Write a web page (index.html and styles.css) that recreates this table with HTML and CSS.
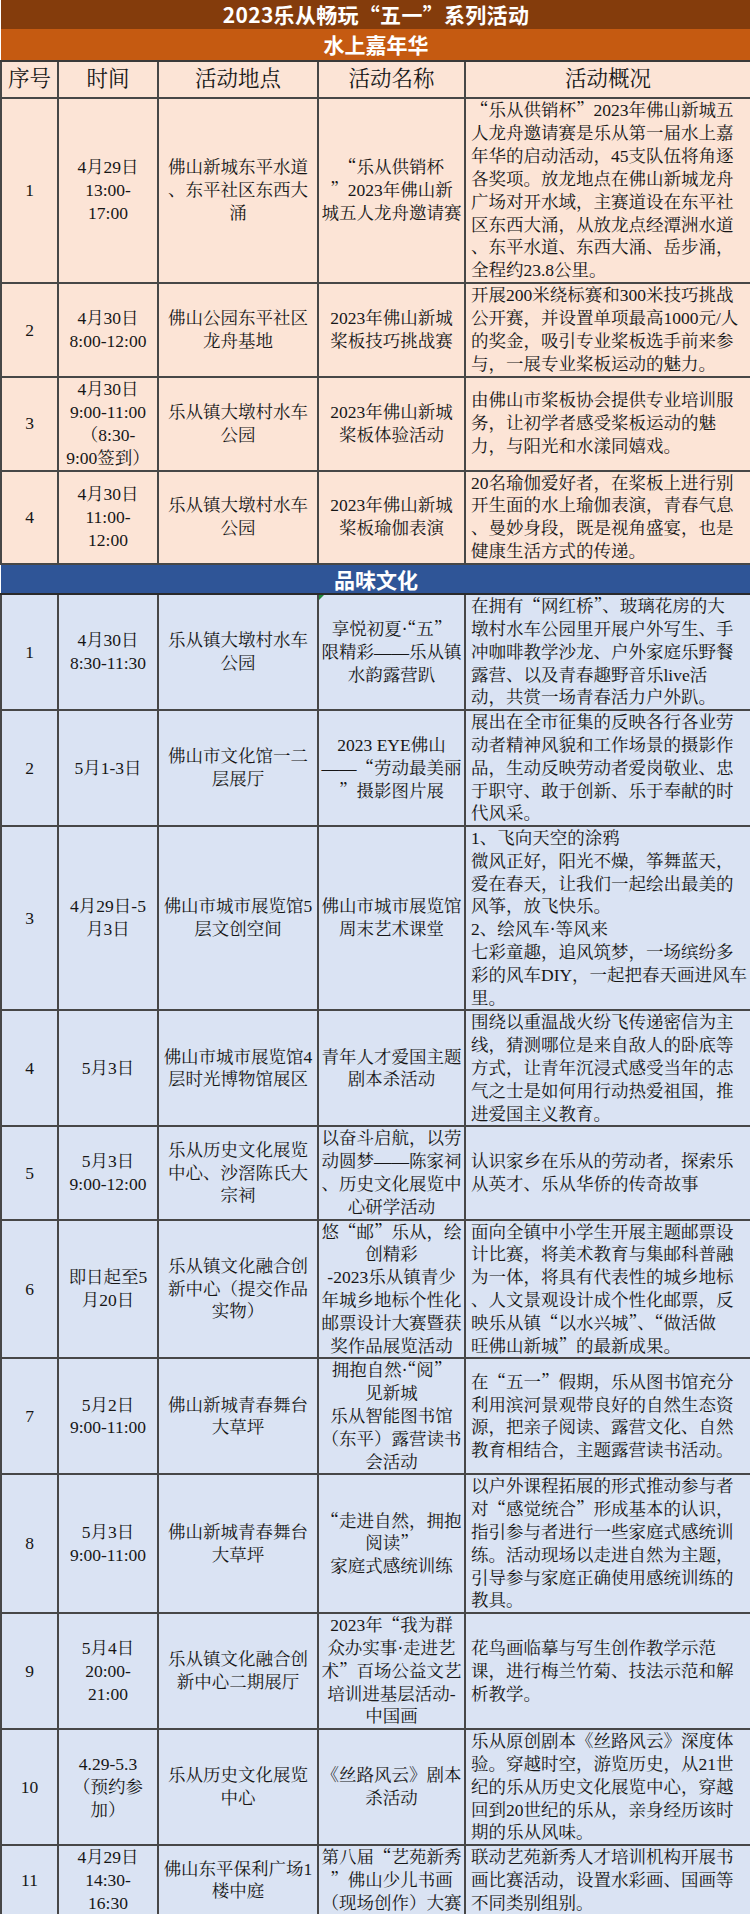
FILE: index.html
```html
<!DOCTYPE html>
<html lang="zh-CN">
<head>
<meta charset="utf-8">
<title>2023乐从畅玩“五一”系列活动</title>
<link rel="stylesheet" href="styles.css">
</head>
<body>
<table class="sheet">
  <colgroup>
    <col class="c-no">
    <col class="c-time">
    <col class="c-place">
    <col class="c-name">
    <col class="c-desc">
  </colgroup>
  <tbody>
    <tr class="banner title"><td colspan="5">2023乐从畅玩“五一”系列活动</td></tr>
    <tr class="banner water-bar"><td colspan="5">水上嘉年华</td></tr>
    <tr class="head">
      <th>序号</th><th>时间</th><th>活动地点</th><th>活动名称</th><th>活动概况</th>
    </tr>

    <tr class="water">
      <td>1</td>
      <td>4月29日<br>13:00-<br>17:00</td>
      <td>佛山新城东平水道<br>、东平社区东西大<br>涌</td>
      <td><span class="q">“</span>乐从供销杯<br><span class="q">”</span>2023年佛山新<br>城五人龙舟邀请赛</td>
      <td class="desc"><span class="q">“</span>乐从供销杯<span class="q">”</span>2023年佛山新城五<br>人龙舟邀请赛是乐从第一届水上嘉<br>年华的启动活动，45支队伍将角逐<br>各奖项。放龙地点在佛山新城龙舟<br>广场对开水域，主赛道设在东平社<br>区东西大涌，从放龙点经潭洲水道<br>、东平水道、东西大涌、岳步涌，<br>全程约23.8公里。</td>
    </tr>
    <tr class="water">
      <td>2</td>
      <td>4月30日<br>8:00-12:00</td>
      <td>佛山公园东平社区<br>龙舟基地</td>
      <td>2023年佛山新城<br>桨板技巧挑战赛</td>
      <td class="desc">开展200米绕标赛和300米技巧挑战<br>公开赛，并设置单项最高1000元/人<br>的奖金，吸引专业桨板选手前来参<br>与，一展专业桨板运动的魅力。</td>
    </tr>
    <tr class="water">
      <td>3</td>
      <td>4月30日<br>9:00-11:00<br>（8:30-<br>9:00签到）</td>
      <td>乐从镇大墩村水车<br>公园</td>
      <td>2023年佛山新城<br>桨板体验活动</td>
      <td class="desc">由佛山市桨板协会提供专业培训服<br>务，让初学者感受桨板运动的魅<br>力，与阳光和水漾同嬉戏。</td>
    </tr>
    <tr class="water">
      <td>4</td>
      <td>4月30日<br>11:00-<br>12:00</td>
      <td>乐从镇大墩村水车<br>公园</td>
      <td>2023年佛山新城<br>桨板瑜伽表演</td>
      <td class="desc">20名瑜伽爱好者，在桨板上进行别<br>开生面的水上瑜伽表演，青春气息<br>、曼妙身段，既是视角盛宴，也是<br>健康生活方式的传递。</td>
    </tr>

    <tr class="banner culture-bar"><td colspan="5">品味文化</td></tr>

    <tr class="culture">
      <td>1</td>
      <td>4月30日<br>8:30-11:30</td>
      <td>乐从镇大墩村水车<br>公园</td>
      <td class="flagged">享悦初夏<span class="q">·“</span>五<span class="q">”</span><br>限精彩——乐从镇<br>水韵露营趴</td>
      <td class="desc">在拥有<span class="q">“</span>网红桥<span class="q">”</span>、玻璃花房的大<br>墩村水车公园里开展户外写生、手<br>冲咖啡教学沙龙、户外家庭乐野餐<br>露营、以及青春趣野音乐live活<br>动，共赏一场青春活力户外趴。</td>
    </tr>
    <tr class="culture">
      <td>2</td>
      <td>5月1-3日</td>
      <td>佛山市文化馆一二<br>层展厅</td>
      <td>2023 EYE佛山<br>——<span class="q">“</span>劳动最美丽<br><span class="q">”</span>摄影图片展</td>
      <td class="desc">展出在全市征集的反映各行各业劳<br>动者精神风貌和工作场景的摄影作<br>品，生动反映劳动者爱岗敬业、忠<br>于职守、敢于创新、乐于奉献的时<br>代风采。</td>
    </tr>
    <tr class="culture">
      <td>3</td>
      <td>4月29日-5<br>月3日</td>
      <td>佛山市城市展览馆5<br>层文创空间</td>
      <td>佛山市城市展览馆<br>周末艺术课堂</td>
      <td class="desc">1、飞向天空的涂鸦<br>微风正好，阳光不燥，筝舞蓝天，<br>爱在春天，让我们一起绘出最美的<br>风筝，放飞快乐。<br>2、绘风车<span class="q">·</span>等风来<br>七彩童趣，追风筑梦，一场缤纷多<br>彩的风车DIY，一起把春天画进风车<br>里。</td>
    </tr>
    <tr class="culture">
      <td>4</td>
      <td>5月3日</td>
      <td>佛山市城市展览馆4<br>层时光博物馆展区</td>
      <td>青年人才爱国主题<br>剧本杀活动</td>
      <td class="desc">围绕以重温战火纷飞传递密信为主<br>线，猜测哪位是来自敌人的卧底等<br>方式，让青年沉浸式感受当年的志<br>气之士是如何用行动热爱祖国，推<br>进爱国主义教育。</td>
    </tr>
    <tr class="culture">
      <td>5</td>
      <td>5月3日<br>9:00-12:00</td>
      <td>乐从历史文化展览<br>中心、沙滘陈氏大<br>宗祠</td>
      <td>以奋斗启航，以劳<br>动圆梦——陈家祠<br>、历史文化展览中<br>心研学活动</td>
      <td class="desc">认识家乡在乐从的劳动者，探索乐<br>从英才、乐从华侨的传奇故事</td>
    </tr>
    <tr class="culture">
      <td>6</td>
      <td>即日起至5<br>月20日</td>
      <td>乐从镇文化融合创<br>新中心（提交作品<br>实物）</td>
      <td>悠<span class="q">“</span>邮<span class="q">”</span>乐从，绘<br>创精彩<br>-2023乐从镇青少<br>年城乡地标个性化<br>邮票设计大赛暨获<br>奖作品展览活动</td>
      <td class="desc">面向全镇中小学生开展主题邮票设<br>计比赛，将美术教育与集邮科普融<br>为一体，将具有代表性的城乡地标<br>、人文景观设计成个性化邮票，反<br>映乐从镇<span class="q">“</span>以水兴城<span class="q">”</span>、<span class="q">“</span>做活做<br>旺佛山新城<span class="q">”</span>的最新成果。</td>
    </tr>
    <tr class="culture">
      <td>7</td>
      <td>5月2日<br>9:00-11:00</td>
      <td>佛山新城青春舞台<br>大草坪</td>
      <td>拥抱自然<span class="q">·“</span>阅<span class="q">”</span><br>见新城<br>乐从智能图书馆<br>（东平）露营读书<br>会活动</td>
      <td class="desc">在<span class="q">“</span>五一<span class="q">”</span>假期，乐从图书馆充分<br>利用滨河景观带良好的自然生态资<br>源，把亲子阅读、露营文化、自然<br>教育相结合，主题露营读书活动。</td>
    </tr>
    <tr class="culture">
      <td>8</td>
      <td>5月3日<br>9:00-11:00</td>
      <td>佛山新城青春舞台<br>大草坪</td>
      <td><span class="q">“</span>走进自然，拥抱<br>阅读<span class="q">”</span><br>家庭式感统训练</td>
      <td class="desc">以户外课程拓展的形式推动参与者<br>对<span class="q">“</span>感觉统合<span class="q">”</span>形成基本的认识，<br>指引参与者进行一些家庭式感统训<br>练。活动现场以走进自然为主题，<br>引导参与家庭正确使用感统训练的<br>教具。</td>
    </tr>
    <tr class="culture">
      <td>9</td>
      <td>5月4日<br>20:00-<br>21:00</td>
      <td>乐从镇文化融合创<br>新中心二期展厅</td>
      <td>2023年<span class="q">“</span>我为群<br>众办实事<span class="q">·</span>走进艺<br>术<span class="q">”</span>百场公益文艺<br>培训进基层活动-<br>中国画</td>
      <td class="desc">花鸟画临摹与写生创作教学示范<br>课，进行梅兰竹菊、技法示范和解<br>析教学。</td>
    </tr>
    <tr class="culture">
      <td>10</td>
      <td>4.29-5.3<br>（预约参<br>加）</td>
      <td>乐从历史文化展览<br>中心</td>
      <td>《丝路风云》剧本<br>杀活动</td>
      <td class="desc">乐从原创剧本《丝路风云》深度体<br>验。穿越时空，游览历史，从21世<br>纪的乐从历史文化展览中心，穿越<br>回到20世纪的乐从，亲身经历该时<br>期的乐从风味。</td>
    </tr>
    <tr class="culture">
      <td>11</td>
      <td>4月29日<br>14:30-<br>16:30</td>
      <td>佛山东平保利广场1<br>楼中庭</td>
      <td>第八届<span class="q">“</span>艺苑新秀<br><span class="q">”</span>佛山少儿书画<br>（现场创作）大赛</td>
      <td class="desc">联动艺苑新秀人才培训机构开展书<br>画比赛活动，设置水彩画、国画等<br>不同类别组别。</td>
    </tr>
  </tbody>
</table>
</body>
</html>
```

FILE: styles.css
```css
html, body {
  margin: 0;
  padding: 0;
  background: #ffffff;
}

.sheet {
  width: 750px;
  border-collapse: collapse;
  table-layout: fixed;
  font-family: "Liberation Serif", "Noto Serif CJK SC", "Noto Sans CJK SC", serif;
  color: #161616;
}

.c-no { width: 57px; }
.c-time { width: 100px; }
.c-place { width: 160px; }
.c-name { width: 147px; }
.c-desc { width: 286px; }

.banner td {
  padding: 0;
  text-align: center;
  vertical-align: middle;
  color: #ffffff;
  font-family: "Noto Sans CJK SC", sans-serif;
  font-weight: 700;
  font-size: 21px;
  white-space: nowrap;
}

.title td {
  background: #843c0c;
  height: 29px;
  line-height: 29px;
  letter-spacing: 0.3px;
}

.water-bar td {
  background: #c55a11;
  height: 31px;
  line-height: 31px;
  border-bottom: 2px solid #3a3a3a;
}

.culture-bar td {
  background: #2f5597;
  height: 28px;
  line-height: 28px;
  border-top: 2px solid #2a2a2a;
  border-bottom: 2px solid #2a2a2a;
}

.head th {
  background: #fce4d6;
  font-weight: 400;
  font-size: 21.5px;
  height: 35px;
  line-height: 35px;
  padding: 0;
  text-align: center;
  vertical-align: middle;
  border: 2px solid #474747;
  white-space: nowrap;
}

.water td,
.culture td {
  border: 2px solid #474747;
  padding: 0;
  font-size: 17.5px;
  line-height: 22.8px;
  text-align: center;
  vertical-align: middle;
  white-space: nowrap;
}

.water td {
  background: #fce4d6;
  line-height: 22.9px;
}

.culture td {
  background: #dae3f3;
}

.water td.desc,
.culture td.desc {
  text-align: left;
  padding-left: 5px;
}

.q {
  font-family: "Noto Serif CJK SC", "Noto Sans CJK SC", sans-serif;
  line-height: 0;
}

.flagged {
  position: relative;
}

.flagged::before {
  content: "";
  position: absolute;
  left: 0;
  top: 0;
  width: 0;
  height: 0;
  border-top: 5px solid #1f8a3a;
  border-right: 5px solid transparent;
}
```
